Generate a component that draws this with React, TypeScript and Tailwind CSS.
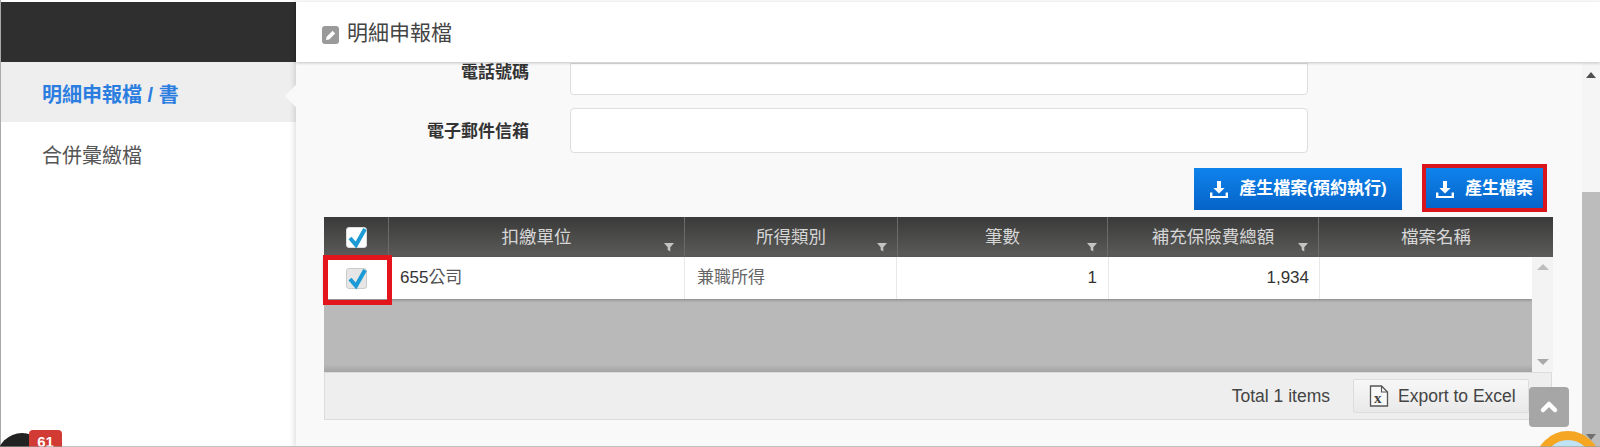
import { ChevronUp } from "lucide-react";

const font = "font-['Liberation_Sans','Noto_Sans_CJK_TC',sans-serif]";

function DownloadIcon() {
  return (
    <svg width="20" height="20" viewBox="0 0 20 20" className="shrink-0" fill="#fff">
      <path d="M8 2h4v7h3.6L10 14.4 4.4 9H8z" />
      <path d="M1 13.5h2.4V17h13.2v-3.5H19V19H1z" />
    </svg>
  );
}

function FilterIcon() {
  return (
    <svg width="10" height="10" viewBox="0 0 10 10" fill="#c4c4c4" className="absolute right-[10px] bottom-[5px]">
      <path d="M0 1h10L6.3 5.2V9.5L3.7 8V5.2z" />
    </svg>
  );
}

function CheckBox({ header }: { header?: boolean }) {
  return (
    <div className={`relative w-[21px] h-[21px] rounded-[3px] border ${header ? "bg-white border-[#ddd]" : "bg-[#e6e6e6] border-[#ccc]"}`}>
      <svg width="26" height="24" viewBox="0 0 26 24" className="absolute left-[-2px] top-[-3px]">
        <path d="M5 13l6 7L20 4" fill="none" stroke="#1c9ad6" strokeWidth="4" />
      </svg>
    </div>
  );
}

function HeadCell({ label, width, filter = true }: { label: string; width: string; filter?: boolean }) {
  return (
    <div className={`relative flex items-center justify-center h-full border-l border-[#6b6b6b] text-[17.5px] text-[#d6d6d6] ${width}`}>
      <span className="mt-[1px]">{label}</span>
      {filter && <FilterIcon />}
    </div>
  );
}

export default function App() {
  return (
    <div className={`relative flex w-[1600px] h-[447px] overflow-hidden bg-white ${font}`}>
      {/* Sidebar */}
      <aside className="w-[296px] shrink-0 h-full border-l border-[#aaa] pt-[2px] bg-white">
        <div className="h-[60px] bg-[#2f2f2f]" />
        <div className="flex items-center h-[60px] pl-[41px] pt-[5px] bg-[#eeeeee] text-[20px] font-bold text-[#2b7de0]">
          明細申報檔 / 書
        </div>
        <div className="flex items-center h-[64px] pl-[41px] pt-[3px] text-[20px] text-[#555]">合併彙繳檔</div>
      </aside>

      {/* Main */}
      <main className="relative flex-1 min-w-0 flex flex-col h-full bg-[#f9f9f9] shadow-[-2px_0_5px_rgba(0,0,0,0.12)]">
        <div className="absolute left-[-8px] top-[88px] w-[16px] h-[16px] rotate-45 bg-[#f9f9f9]" />
        <header className="relative z-10 h-[60px] mt-[2px] mb-[1px] shrink-0 flex items-center pl-[26px] gap-[8px] bg-white shadow-[0_1px_3px_rgba(0,0,0,0.22)]">
          <svg width="17" height="18" viewBox="0 0 17 18" className="mt-[6px]">
            <rect width="17" height="18" rx="3" fill="#9a9a9a" />
            <path d="M4 14l.6-3.2 6-6 2.6 2.6-6 6z" fill="#fff" />
          </svg>
          <span className="text-[21px] text-[#444] mt-[1px]">明細申報檔</span>
        </header>

        <div className="flex flex-1 min-h-0">
          <div className="flex-1 min-w-0 pl-[28px] pr-[29px]">
            {/* Form rows */}
            <div className="flex items-end h-[31px]">
              <div className="w-[205px] text-right text-[17px] font-bold text-[#333] pb-[9px]">電話號碼</div>
              <div className="ml-[41px] w-[738px] h-[32px] -mb-[1px] bg-white border border-[#ddd] rounded-b-[4px]" />
            </div>
            <div className="flex items-center mt-[14px] h-[45px]">
              <div className="w-[205px] text-right text-[17px] font-bold text-[#333] pt-[2px]">電子郵件信箱</div>
              <div className="ml-[41px] w-[738px] h-[45px] bg-white border border-[#ddd] rounded-[4px]" />
            </div>

            {/* Actions */}
            <div className="flex justify-end items-center gap-[22px] h-[44px] mt-[14px] pr-[9px]">
              <button className="flex items-center justify-center gap-[10px] w-[208px] h-[42px] text-[17px] font-bold text-white bg-gradient-to-b from-[#0f83ec] to-[#0663c8]">
                <DownloadIcon />
                產生檔案(預約執行)
              </button>
              <button className="flex items-center justify-center gap-[10px] w-[120px] h-[42px] text-[17px] font-bold text-white bg-gradient-to-b from-[#0f83ec] to-[#0663c8]">
                <DownloadIcon />
                產生檔案
              </button>
            </div>

            {/* Grid */}
            <div className="mt-[6px] w-[1229px]">
              <div className="flex h-[40px] bg-gradient-to-b from-[#3a3a3a] to-[#5c5c5a]">
                <div className="flex items-center justify-center w-[64px] h-full">
                  <CheckBox header />
                </div>
                <HeadCell label="扣繳單位" width="w-[296px]" />
                <HeadCell label="所得類別" width="w-[213px]" />
                <HeadCell label="筆數" width="w-[210px]" />
                <HeadCell label="補充保險費總額" width="w-[211px]" />
                <HeadCell label="檔案名稱" width="w-[235px]" filter={false} />
              </div>
              <div className="flex h-[115px]">
                <div className="flex-1 min-w-0 flex flex-col">
                  <div className="flex h-[42px] bg-white text-[17px] text-[#333] shadow-[0_1px_3px_rgba(0,0,0,0.3)] relative">
                    <div className="flex items-center justify-center w-[64px]">
                      <CheckBox />
                    </div>
                    <div className="flex items-center w-[297px] pl-[12px] border-r border-[#e8e8e8]">
                      655<span className="text-[#555]">公司</span>
                    </div>
                    <div className="flex items-center w-[212px] pl-[12px] text-[#666] border-r border-[#e8e8e8]">兼職所得</div>
                    <div className="flex items-center justify-end w-[212px] pr-[11px] border-r border-[#e8e8e8]">1</div>
                    <div className="flex items-center justify-end w-[211px] pr-[10px] border-r border-[#e8e8e8]">1,934</div>
                  </div>
                  <div className="flex-1 bg-gradient-to-b from-[#b9b9b9] from-[90%] to-[#a3a3a3]" />
                </div>
                <div className="relative w-[21px] bg-[#f3f3f3]">
                  <div className="absolute left-[5px] top-[7px] w-0 h-0 border-x-[6px] border-x-transparent border-b-[6px] border-b-[#bdbdbd]" />
                  <div className="absolute left-[5px] bottom-[7px] w-0 h-0 border-x-[6px] border-x-transparent border-t-[6px] border-t-[#a8a8a8]" />
                </div>
              </div>
              <div className="flex items-center justify-end h-[48px] w-[1228px] bg-[#eeeeee] border border-[#dcdcdc] pr-[22px] text-[#444]">
                <span className="text-[17.5px] mr-[23px]">Total 1 items</span>
                <button className="flex items-center gap-[9px] w-[176px] h-[34px] pl-[15px] text-[17.5px] whitespace-nowrap bg-gradient-to-b from-[#f7f7f7] to-[#e9e9e9] border border-[#dddddd] rounded-[2px]">
                  <svg width="20" height="22" viewBox="0 0 20 22" className="shrink-0">
                    <path d="M1.5 1h11l6 6v14h-17z" fill="#f8f8f8" stroke="#555" strokeWidth="1.3" />
                    <path d="M12.5 1v6h6" fill="none" stroke="#555" strokeWidth="1.1" />
                    <text x="5" y="18" fontSize="15" fontWeight="700" fill="#444" fontFamily="Liberation Serif, serif">x</text>
                  </svg>
                  Export to Excel
                </button>
              </div>
            </div>
          </div>

          {/* Page scrollbar */}
          <div className="relative w-[18px] shrink-0 bg-[#f5f5f5]">
            <div className="absolute left-[4px] top-[9px] w-0 h-0 border-x-[5px] border-x-transparent border-b-[6px] border-b-[#505050]" />
            <div className="absolute left-0 right-0 top-[129px] bottom-0 bg-[#bcbcbc]" />
            <div className="absolute left-[4px] bottom-[7px] w-0 h-0 border-x-[5px] border-x-transparent border-t-[6px] border-t-[#707070]" />
          </div>
        </div>
      </main>

      {/* Red highlight marks over the shot */}
      <div className="absolute left-[1422px] top-[164px] w-[125px] h-[48px] border-[4px] border-[#d9161d]" />
      <div className="absolute left-[323px] top-[255px] w-[69px] h-[50px] border-[5px] border-[#e3141b]" />

      {/* Back to top */}
      <div className="absolute left-[1529px] top-[387px] flex items-center justify-center w-[40px] h-[40px] rounded-[4px] bg-[#a1a1a1]/95">
        <ChevronUp size={24} strokeWidth={4.5} color="#fff" />
      </div>

      {/* Floating widgets cut off by the bottom edge */}
      <div className="absolute left-[-3px] top-[433px] w-[50px] h-[50px] rounded-full bg-[#222]" />
      <div className="absolute left-[29px] top-[430px] flex justify-center w-[33px] h-[24px] rounded-[4px] bg-[#d23a34] text-[15px] font-bold text-white pt-[1px]">
        61
      </div>
      <div className="absolute left-[1535px] top-[431px] w-[66px] h-[66px] rounded-full bg-[#bfe3f5] border-[9px] border-[#f5a623]" />
      <div className="absolute left-0 right-0 bottom-0 h-[1px] bg-[#999]/60" />
    </div>
  );
}
